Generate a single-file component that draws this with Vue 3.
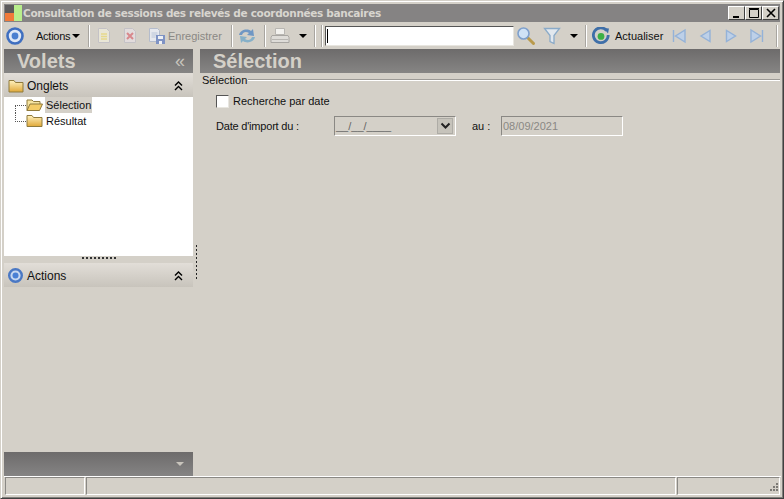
<script setup>
const navIcons = [
  'M3.500 3v12M15 3v12L5.500 9z',
  'M14 3.500v11L5 9z',
  'M4.500 3.500v11l9-5.500z',
  'M14.500 3v12M3 3v12l9.500-6z'
]
</script>

<template>
  <div class="window">
    <div class="titlebar">
      <svg class="logo" width="18" height="18" viewBox="0 0 18 18">
        <rect x="1" y="1" width="9" height="8" fill="#5c5a5a" />
        <rect x="1" y="9" width="9" height="8" fill="#f07a3a" />
        <rect x="10" y="1" width="8" height="16" fill="#b9ee8c" />
      </svg>
      <span class="title">Consultation de sessions des relevés de coordonnées bancaires</span>
      <div class="winbtns">
        <div class="winbtn"><svg width="14" height="12" viewBox="0 0 14 12"><rect x="3" y="9" width="6" height="2" fill="#000" /></svg></div>
        <div class="winbtn"><svg width="14" height="12" viewBox="0 0 14 12"><path d="M2.500 2.500h9v8h-9zM2 1.500h10" fill="none" stroke="#000" /></svg></div>
        <div class="winbtn"><svg width="14" height="12" viewBox="0 0 14 12"><path d="M3 2l8 8M11 2l-8 8" stroke="#000" stroke-width="1.600" /></svg></div>
      </div>
    </div>

    <div class="toolbar">
      <div class="slot s-a">
        <svg width="20" height="20" viewBox="0 0 20 20"><circle cx="10" cy="10" r="7.500" fill="#dfe8f6" stroke="#3f6fc0" stroke-width="2.600" /><circle cx="10" cy="10" r="3.400" fill="#4a7fd0" /></svg>
      </div>
      <div class="slot s-actions"><span class="tight">Actions</span><i class="caret"></i></div>
      <i class="sep"></i>
      <div class="slot s-doc">
        <svg width="16" height="17" viewBox="0 0 16 17"><path d="M2.500 1.500h8l3 3v11h-11z" fill="#e9e6d6" stroke="#c4c2c6" /><path d="M5 7h6M5 9.500h6M5 12h6" stroke="#e6d98c" stroke-width="1.400" /></svg>
      </div>
      <div class="slot s-del">
        <svg width="16" height="17" viewBox="0 0 16 17"><path d="M2.500 1.500h8l3 3v11h-11z" fill="#e2dcdc" stroke="#c4c2c6" /><path d="M5 6l6 6M11 6l-6 6" stroke="#d8888c" stroke-width="2" /></svg>
      </div>
      <div class="slot s-save">
        <svg width="18" height="18" viewBox="0 0 18 18"><path d="M1.500 1.500h8l2 2v11h-10z" fill="#e6e8ee" stroke="#b4bccc" /><path d="M3.500 6h6M3.500 8h6M3.500 10h4" stroke="#b9c4d8" /><rect x="8" y="8" width="9" height="9" fill="#7f93c4" /><rect x="10" y="9" width="5" height="3" fill="#eef0f4" /><rect x="11" y="14" width="3" height="3" fill="#eef0f4" /></svg>
      </div>
      <span class="muted s-save-t">Enregistrer</span>
      <i class="sep"></i>
      <div class="slot s-sync">
        <svg width="20" height="18" viewBox="0 0 20 18"><path d="M2 8c1-5 8-7 12-4l2-2 1 7-7-1 2-2c-3-2-6-1-7 2z" fill="#6f97c4" /><path d="M18 10c-1 5-8 7-12 4l-2 2-1-7 7 1-2 2c3 2 6 1 7-2z" fill="#86b0c8" /></svg>
      </div>
      <i class="sep"></i>
      <div class="slot s-print">
        <svg width="20" height="18" viewBox="0 0 20 18"><path d="M5.500 1.500h9v6h-9z" fill="#f2f1ee" stroke="#b8b6b2" /><path d="M2 8.500h16l1 2v5H1v-5z" fill="#dedcd8" stroke="#a8a6a2" /><path d="M2 12.500h16" stroke="#b8b6b2" /></svg>
      </div>
      <div class="slot s-pcaret"><i class="caret"></i></div>
      <i class="sep"></i>
      <i class="sep s-sep2"></i>
      <div class="search"><i class="cursor"></i></div>
      <div class="slot s-find">
        <svg width="20" height="20" viewBox="0 0 20 20"><path d="M11.500 11.500l6 6" stroke="#b99a4c" stroke-width="3" stroke-linecap="round" /><circle cx="7.500" cy="7.500" r="5.500" fill="#cfe2f6" stroke="#7fa0cc" stroke-width="1.600" /></svg>
      </div>
      <div class="slot s-filter">
        <svg width="18" height="18" viewBox="0 0 18 18"><path d="M1.500 1.500h15l-5.500 7v8l-4-2v-6z" fill="#e2e8ee" stroke="#8aaac8" stroke-width="1.300" /></svg>
      </div>
      <div class="slot s-fcaret"><i class="caret"></i></div>
      <i class="sep"></i>
      <div class="slot s-refresh">
        <svg width="18" height="18" viewBox="0 0 18 18"><path d="M14.600 3.600A7.400 7.400 0 1 0 16.200 8" fill="none" stroke="#3f6fa8" stroke-width="2.800" /><path d="M11.500 1l5.500.5-1 5z" fill="#3f6fa8" /><circle cx="9" cy="9.400" r="3.400" fill="#3cb044" /></svg>
      </div>
      <span class="s-act-t">Actualiser</span>
      <div class="nav">
        <svg v-for="d in navIcons" :key="d" width="18" height="18" viewBox="0 0 18 18"><path :d="d" fill="#bdd0e8" stroke="#94b2d8" stroke-width="1.400" /></svg>
      </div>
      <i class="sep"></i>
    </div>

    <div class="body">
      <aside class="side">
        <div class="dark-head">
          <span class="head-title">Volets</span>
          <span class="chev-left">«</span>
        </div>
        <div class="light-head">
          <svg class="folder-i" width="17" height="16" viewBox="0 0 17 16"><path d="M2 14V2.500h5l1.500 2H16V14z" fill="url(#fg1)" stroke="#8f7a3c" /><defs><linearGradient id="fg1" x1="0" y1="0" x2="0" y2="1"><stop offset="0" stop-color="#fff2c0" /><stop offset="1" stop-color="#e0a838" /></linearGradient></defs></svg>
          <span>Onglets</span>
          <svg class="dbl" width="9" height="10" viewBox="0 0 9 10"><path d="M1 4.500l3.500-3.500 3.500 3.500M1 9l3.500-3.500L8 9" fill="none" stroke="#000" stroke-width="1.400" /></svg>
        </div>
        <div class="tree">
          <div class="tree-row">
            <i class="branch branch-first"></i>
            <svg width="17" height="14" viewBox="0 0 17 14"><path d="M1 12.500V2h5l1.500 1.500H14V6" fill="#f6e4a0" stroke="#8f7a3c" /><path d="M1 12.500L4 6h12.500l-3 6.500z" fill="#f4cc66" stroke="#8f7a3c" /></svg>
            <span class="leaf selected">Sélection</span>
          </div>
          <div class="tree-row">
            <i class="branch branch-last"></i>
            <svg width="17" height="14" viewBox="0 0 17 14"><path d="M1 12.500V1.500h5l1.500 2H16v9z" fill="url(#fg1)" stroke="#8f7a3c" /></svg>
            <span class="leaf">Résultat</span>
          </div>
        </div>
        <div class="hsplit"><i></i></div>
        <div class="light-head">
          <svg class="folder-i" width="17" height="17" viewBox="0 0 17 17"><circle cx="8.500" cy="8.500" r="6.300" fill="#c8d8f0" stroke="#4a78c4" stroke-width="2.400" /><circle cx="8.500" cy="8.500" r="3" fill="#4a80d4" /></svg>
          <span>Actions</span>
          <svg class="dbl" width="9" height="10" viewBox="0 0 9 10"><path d="M1 4.500l3.500-3.500 3.500 3.500M1 9l3.500-3.500L8 9" fill="none" stroke="#000" stroke-width="1.400" /></svg>
        </div>
        <div class="side-fill"></div>
        <div class="dark-foot"><i class="foot-caret"></i></div>
      </aside>

      <div class="vsplit"><i></i></div>

      <main class="main">
        <div class="dark-head main-head"><span class="head-title">Sélection</span></div>
        <div class="legend-row"><span>Sélection</span><i></i></div>
        <label class="check-row"><i class="check"></i><span>Recherche par date</span></label>
        <div class="form-row">
          <span class="date-label">Date d'import du :</span>
          <div class="combo">
            <span class="mask">__/__/____</span>
            <i class="combo-btn"><svg width="11" height="8" viewBox="0 0 11 8"><path d="M1.500 1.500l4 4 4-4" fill="none" stroke="#222" stroke-width="2" /></svg></i>
          </div>
          <span class="au">au :</span>
          <div class="date-input">08/09/2021</div>
        </div>
      </main>
    </div>

    <div class="status">
      <div class="cell c1"></div>
      <div class="cell c2"></div>
      <div class="cell c3">
        <svg class="grip" width="12" height="12" viewBox="0 0 12 12"><path d="M9 1h2v2H9zM6 4h2v2H6zM9 4h2v2H9zM3 7h2v2H3zM6 7h2v2H6zM9 7h2v2H9z" fill="#7c7a76" /></svg>
      </div>
    </div>
  </div>
</template>

<style scoped>
.window {
  box-sizing: border-box;
  width: 784px;
  height: 499px;
  display: flex;
  flex-direction: column;
  padding: 2px 2px 2px 2px;
  background: #d4d0c8;
  border-style: solid;
  border-width: 1px;
  border-color: #d4d0c8 #404040 #404040 #d4d0c8;
  box-shadow: inset 1px 1px 0 #fff, inset -1px -1px 0 #807e7a;
  font: 11px "Liberation Sans", Arial, sans-serif;
  color: #111;
  overflow: hidden;
}
.titlebar {
  flex: none;
  height: 18px;
  margin: 1px 1px 0 1px;
  background: #858383;
  display: flex;
  align-items: center;
}
.logo { flex: none; margin-right: 1px; }
.title {
  color: #d8d5cf;
  font: bold 10.500px "DejaVu Sans", sans-serif;
  letter-spacing: -0.330px;
  white-space: nowrap;
}
.winbtns { margin-left: auto; display: flex; margin-right: 1px; }
.winbtn {
  box-sizing: border-box;
  width: 17px;
  height: 14px;
  background: #d4d0c8;
  border: 1px solid;
  border-color: #fff #404040 #404040 #fff;
  display: flex;
  align-items: center;
  justify-content: center;
}
.winbtn svg { flex: none; }
.toolbar {
  flex: none;
  height: 27px;
  margin: 0 1px;
  display: flex;
  align-items: center;
}
.slot { flex: none; display: flex; align-items: center; justify-content: center; }
.sep {
  flex: none;
  width: 1px;
  height: 22px;
  background: #a8a5a0;
  border-right: 1px solid #fff;
}
.caret {
  width: 0;
  height: 0;
  border-style: solid;
  border-width: 4px 4px 0 4px;
  border-color: #000 transparent transparent;
}
.tight { letter-spacing: -0.250px; }
.s-a { width: 22px; }
.s-actions { width: 62px; gap: 2px; padding-left: 10px; box-sizing: border-box; justify-content: flex-start; }
.s-doc { width: 28px; margin-left: 0; }
.s-del { width: 26px; margin-left: -1px; }
.s-save { width: 26px; margin-left: 1px; }
.muted { color: #8a8884; }
.s-save-t { flex: none; width: 63px; margin-left: -2px; }
.s-sync { width: 31px; box-sizing: border-box; padding-right: 4px; }
.s-print { width: 28px; }
.s-pcaret { width: 17px; margin-right: 3px; }
.s-sep2 { margin-left: 5px; }
.search {
  box-sizing: border-box;
  flex: none;
  width: 189px;
  height: 20px;
  margin-left: 2px;
  background: #fff;
  border: 1px solid;
  border-color: #555 #e8e6e0 #e8e6e0 #555;
  padding: 2px 0 2px 1px;
  display: flex;
}
.cursor { width: 1px; height: 14px; background: #000; }
.s-find { width: 23px; }
.s-filter { width: 30px; }
.s-fcaret { width: 14px; margin-right: 4px; }
.s-refresh { width: 28px; }
.s-act-t { flex: none; width: 49px; margin-left: 0; }
.nav { flex: none; width: 112px; display: flex; gap: 8px; padding: 0 10px 0 6px; box-sizing: border-box; }
.nav svg { flex: none; }
.body { flex: 1; display: flex; min-height: 0; margin: 0 1px; }
.side { flex: none; width: 189px; display: flex; flex-direction: column; }
.dark-head {
  flex: none;
  height: 24px;
  background: linear-gradient(#6d6b6b, #868584);
  display: flex;
  align-items: center;
  padding-left: 13px;
}
.head-title { color: #d4d0c8; font: bold 20px "Liberation Sans", sans-serif; }
.chev-left { margin-left: auto; margin-right: 8px; color: #c8c4bc; font-size: 18px; line-height: 20px; }
.light-head {
  flex: none;
  height: 24px;
  box-sizing: border-box;
  background: linear-gradient(#e2ded8, #c8c4bc);
  display: flex;
  align-items: center;
  padding: 1px 10px 0 3px;
  font-size: 12px;
}
.folder-i { flex: none; margin-right: 3px; }
.dbl { margin-left: auto; }
.tree { flex: none; height: 159px; background: #fff; }
.tree-row { height: 16px; display: flex; align-items: center; }
.branch { flex: none; width: 11px; height: 16px; margin-left: 11px; box-sizing: border-box; }
.branch-first {
  height: 8px;
  margin-top: 8px;
  border-left: 1px dotted #555;
  border-top: 1px dotted #555;
}
.branch-last {
  height: 9px;
  margin-bottom: 7px;
  border-left: 1px dotted #555;
  border-bottom: 1px dotted #555;
}
.leaf { margin-left: 2px; padding: 0 1px; height: 16px; line-height: 16px; font-size: 11px; }
.selected { background: #d4d0c8; }
.hsplit { flex: none; height: 7px; display: flex; justify-content: center; padding-top: 1px; box-sizing: border-box; }
.hsplit i { width: 34px; height: 2px; background-image: repeating-linear-gradient(90deg, #333 0 2px, transparent 2px 4px); }
.side-fill { flex: 1; }
.dark-foot {
  flex: none;
  height: 24px;
  background: linear-gradient(#6d6b6b, #858484);
  display: flex;
  align-items: center;
  justify-content: flex-end;
  padding-right: 9px;
}
.foot-caret {
  width: 0;
  height: 0;
  border-style: solid;
  border-width: 4px 4px 0 4px;
  border-color: #c8c4bc transparent transparent;
}
.vsplit { flex: none; width: 7px; display: flex; align-items: flex-start; justify-content: center; }
.vsplit i { margin-top: 196px; width: 1px; height: 35px; background-image: repeating-linear-gradient(#222 0 2px, transparent 2px 4px); }
.main { flex: 1; min-width: 0; display: flex; flex-direction: column; }
.main-head { padding-left: 13px; }
.legend-row { display: flex; align-items: center; height: 14px; margin: 0 0 0 2px; }
.legend-row i { flex: 1; height: 1px; background: #9c9a96; border-bottom: 1px solid #fff; margin-left: 1px; }
.check-row { display: flex; align-items: center; margin: 7px 0 0 16px; height: 14px; gap: 4px; }
.check {
  box-sizing: border-box;
  width: 13px;
  height: 13px;
  background: #fff;
  border: 1px solid;
  border-color: #555 #e8e6e0 #e8e6e0 #555;
  flex: none;
}
.form-row { display: flex; align-items: center; margin: 8px 0 0 16px; height: 20px; }
.date-label { flex: none; width: 118px; letter-spacing: -0.200px; }
.combo {
  box-sizing: border-box;
  flex: none;
  width: 122px;
  height: 20px;
  border: 1px solid;
  border-color: #8a8884 #fff #fff #8a8884;
  display: flex;
  align-items: center;
  justify-content: space-between;
  padding: 0 2px 0 1px;
  color: #666;
}
.combo-btn {
  box-sizing: border-box;
  width: 16px;
  height: 16px;
  background: #c6c3bb;
  border: 1px solid #aeaca6;
  display: flex;
  align-items: center;
  justify-content: center;
}
.au { flex: none; margin-left: 16px; width: 29px; }
.date-input {
  box-sizing: border-box;
  flex: none;
  width: 122px;
  height: 20px;
  line-height: 18px;
  padding-left: 1px;
  border: 1px solid;
  border-color: #8a8884 #fff #fff #8a8884;
  color: #8a8884;
}
.status {
  flex: none;
  height: 20px;
  box-sizing: border-box;
  margin-left: 1px;
  border-top: 1px solid #fff;
  padding: 0 1px;
  display: flex;
  gap: 1px;
}
.cell {
  box-sizing: border-box;
  height: 18px;
  border: 1px solid;
  border-color: #8a8884 #fff #fff #8a8884;
  display: flex;
  justify-content: flex-end;
  align-items: flex-end;
}
.c1 { flex: none; width: 80px; }
.c2 { flex: 1; }
.c3 { flex: none; width: 103px; }
.grip { flex: none; }
</style>
